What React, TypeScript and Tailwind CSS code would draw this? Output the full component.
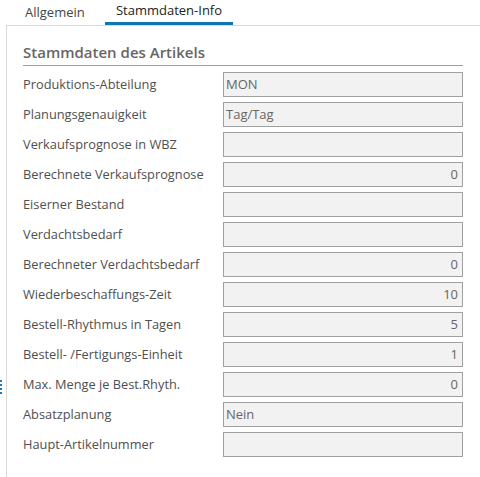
import type { FC } from "react";

interface FieldRowProps {
  label: string;
  value?: string;
  align?: "left" | "right";
}

const rows: FieldRowProps[] = [
  { label: "Produktions-Abteilung", value: "MON" },
  { label: "Planungsgenauigkeit", value: "Tag/Tag" },
  { label: "Verkaufsprognose in WBZ" },
  { label: "Berechnete Verkaufsprognose", value: "0", align: "right" },
  { label: "Eiserner Bestand" },
  { label: "Verdachtsbedarf" },
  { label: "Berechneter Verdachtsbedarf", value: "0", align: "right" },
  { label: "Wiederbeschaffungs-Zeit", value: "10", align: "right" },
  { label: "Bestell-Rhythmus in Tagen", value: "5", align: "right" },
  { label: "Bestell- /Fertigungs-Einheit", value: "1", align: "right" },
  { label: "Max. Menge je Best.Rhyth.", value: "0", align: "right" },
  { label: "Absatzplanung", value: "Nein" },
  { label: "Haupt-Artikelnummer" },
];

const FieldRow: FC<FieldRowProps> = ({ label, value, align = "left" }) => (
  <div className="flex h-[25px] items-center">
    <div className="w-[200px] shrink-0 text-[12.8px] text-[#4f4f4f]">{label}</div>
    <div
      className={`flex h-[25px] w-[240px] items-center border border-[#a0a0a0] bg-[#f2f2f2] text-[13px] text-[#666] ${
        align === "right" ? "justify-end pr-[4px]" : "justify-start pl-[2px]"
      }`}
    >
      {value}
    </div>
  </div>
);

export default function App() {
  return (
    <div
      className="relative h-[477px] w-[480px] overflow-hidden bg-white"
      style={{ fontFamily: '"Open Sans", "Noto Sans", sans-serif' }}
    >
      {/* tabs */}
      <div className="flex h-[25px] items-stretch">
        <div className="flex w-[105px] items-center pl-[25px] text-[13px] text-[#444]">Allgemein</div>
        <div className="flex w-[128px] items-center justify-center border-b-[3px] border-[#0f75b3] text-[13px] text-[#222]">
          Stammdaten-Info
        </div>
      </div>

      {/* panel */}
      <div className="ml-[6px] h-[452px] border-l border-t border-[#d9d9d9] pl-[16px]">
        <div className="mt-[14px] flex h-[26px] w-[440px] items-center border-b border-[#a0a0a0] text-[15px] font-semibold text-[#666]">
          Stammdaten des Artikels
        </div>
        <div className="flex flex-col gap-[5px] pt-[6px]">
          {rows.map((r) => (
            <FieldRow key={r.label} {...r} />
          ))}
        </div>
      </div>

      {/* splitter marker */}
      <div className="absolute left-0 top-[380px] flex flex-col gap-[2px]">
        {[0, 1, 2, 3].map((i) => (
          <div key={i} className="h-[2px] w-[2px] bg-[#1a7bc4]" />
        ))}
      </div>
    </div>
  );
}
